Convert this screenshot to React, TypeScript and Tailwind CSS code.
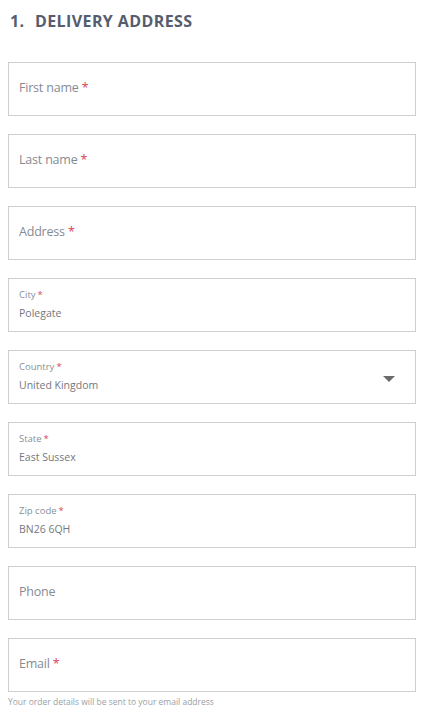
const Req = () => <span className="text-[#d6455b]"> *</span>;

type Field = {
  label: string;
  required?: boolean;
  value?: string;
  select?: boolean;
};

const fields: Field[] = [
  { label: "First name", required: true },
  { label: "Last name", required: true },
  { label: "Address", required: true },
  { label: "City", required: true, value: "Polegate" },
  { label: "Country", required: true, value: "United Kingdom", select: true },
  { label: "State", required: true, value: "East Sussex" },
  { label: "Zip code", required: true, value: "BN26 6QH" },
  { label: "Phone" },
  { label: "Email", required: true },
];

const FieldBox = ({ f }: { f: Field }) => {
  return (
    <div
      className={
        f.value
          ? "relative flex h-[54px] w-[408px] flex-col justify-center border border-[#cfcfcf] bg-white px-[10px] pb-[1px]"
          : "relative flex h-[54px] w-[408px] flex-col justify-center border border-[#cfcfcf] bg-white px-[10px] pb-[3px]"
      }
    >
      {f.value ? (
        <>
          <div className="text-[9.5px] leading-[14px] text-[#8a8f96]">
            {f.label}
            {f.required && <span className="ml-[2px] text-[#d6455b]">*</span>}
          </div>
          <div className="mt-[4px] text-[10.5px] leading-[15px] text-[#74787e]">
            {f.value}
          </div>
        </>
      ) : (
        <div className="text-[12.5px] leading-[18px] tracking-[-0.2px] text-[#858b93]">
          {f.label}
          {f.required && <Req />}
        </div>
      )}
      {f.select && (
        <div className="absolute right-[20px] top-[25px] h-0 w-0 border-x-[6px] border-t-[6px] border-x-transparent border-t-[#6b6b6b]" />
      )}
    </div>
  );
};

export default function App() {
  return (
    <div
      className="min-h-[718px] w-[428px] bg-white pl-2"
      style={{ fontFamily: '"Open Sans", "Noto Sans", sans-serif' }}
    >
      <h2 className="flex pl-[2px] pt-[11px] text-[16px] font-bold leading-[20px] tracking-[0.4px] text-[#565d6e]">
        <span className="w-[25px]">1.</span>
        <span>DELIVERY ADDRESS</span>
      </h2>
      <div className="mt-[31px] flex flex-col gap-[18px]">
        {fields.map((f) => (
          <FieldBox key={f.label} f={f} />
        ))}
      </div>
      <p className="mt-[4px] text-[8.5px] leading-[12px] text-[#9a9fa6]">
        Your order details will be sent to your email address
      </p>
    </div>
  );
}
